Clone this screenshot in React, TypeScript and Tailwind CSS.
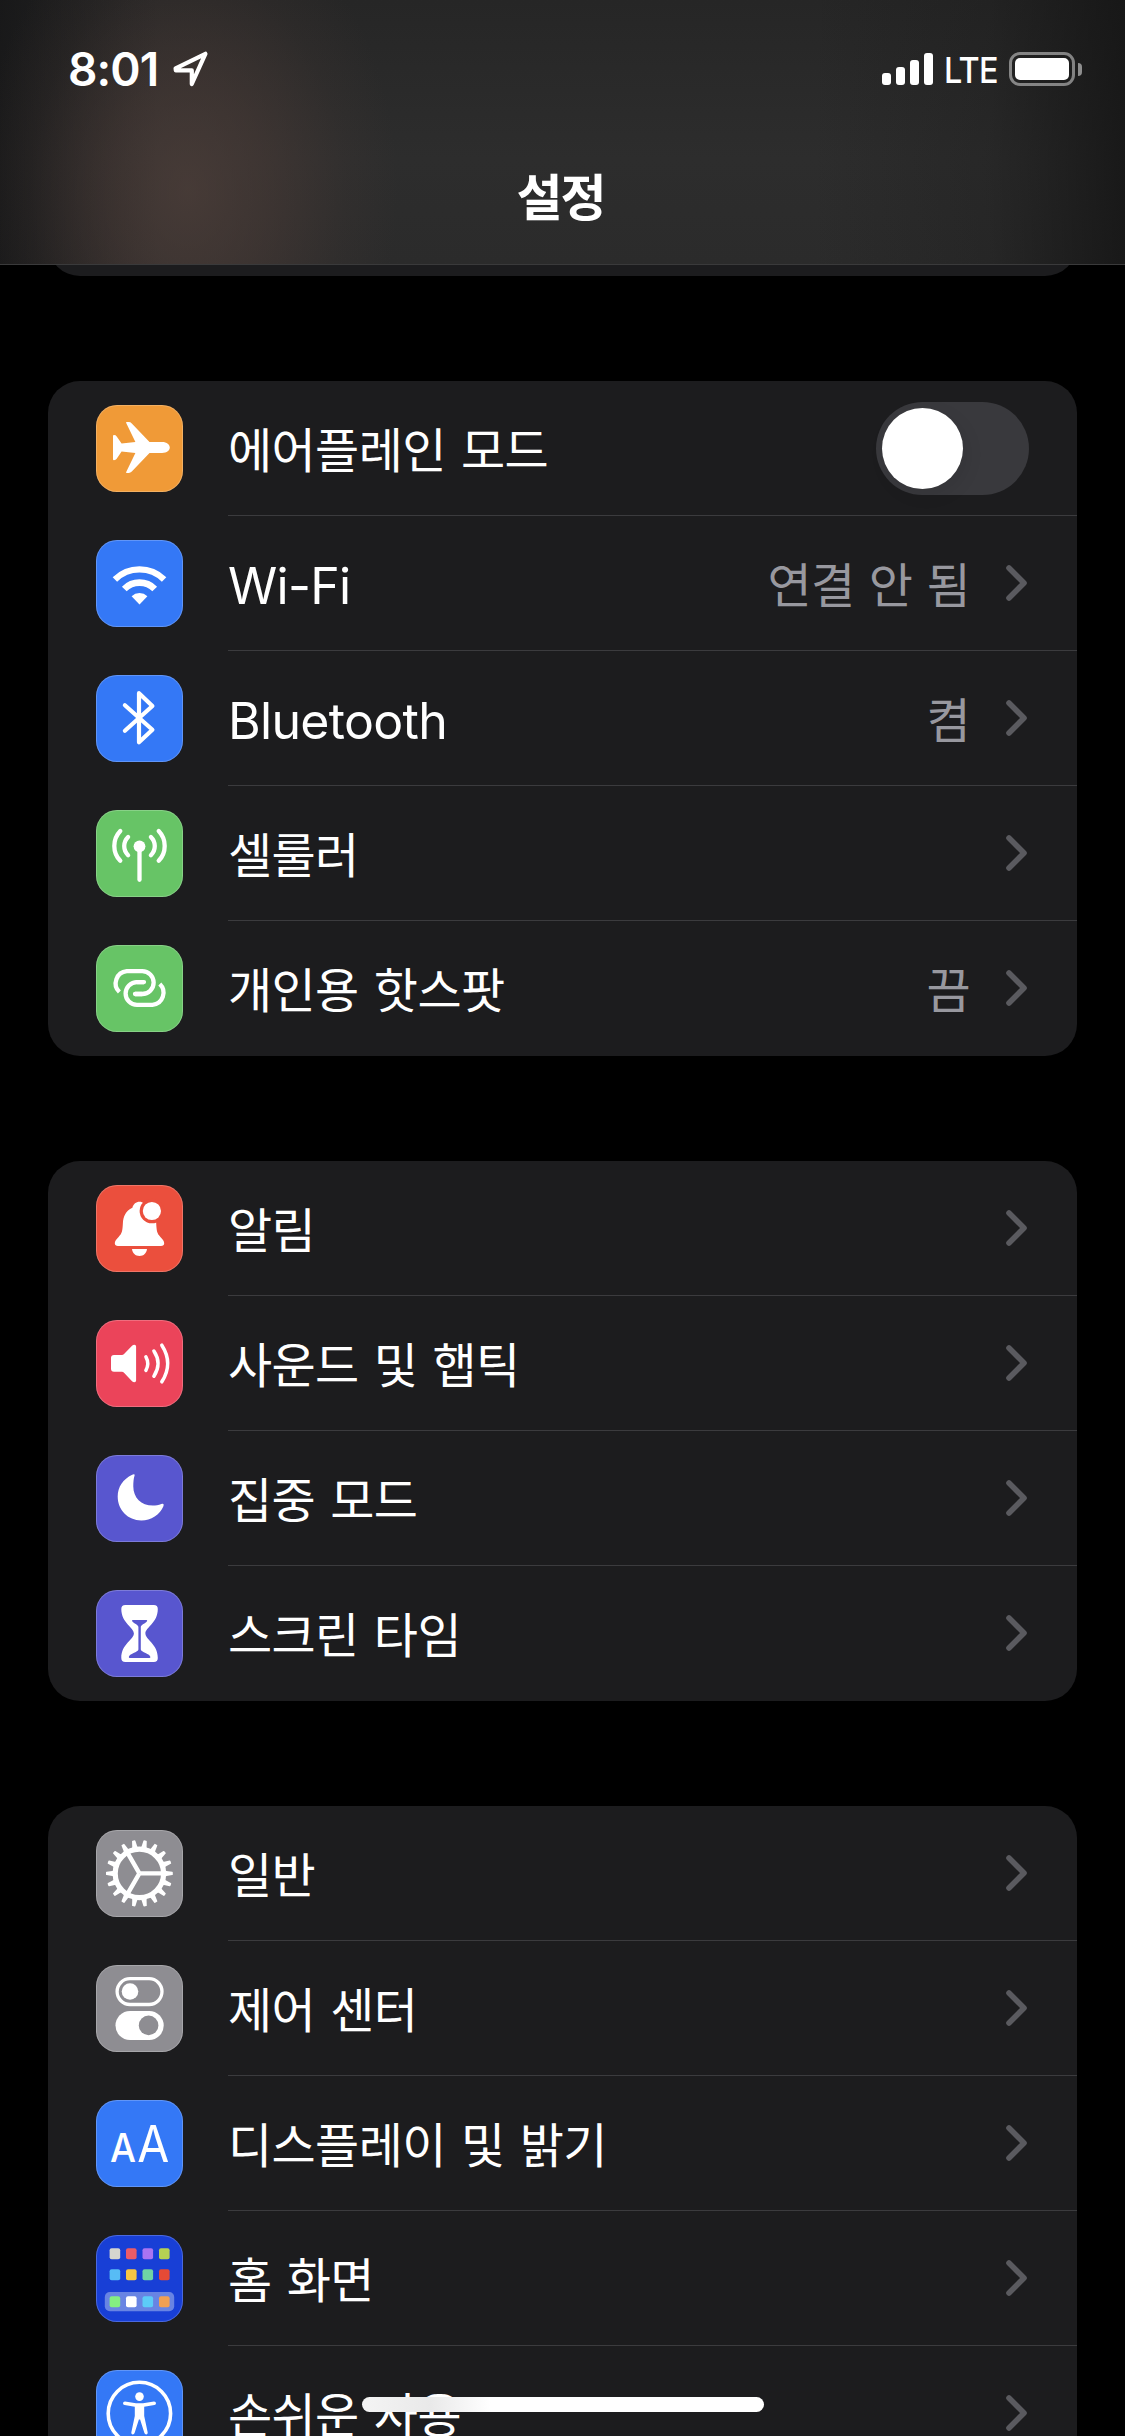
import type { ReactNode } from "react";

const KR = "font-['Noto_Sans_CJK_KR',sans-serif]";

function Plane() {
  return (
    <path
      fill="#fff"
      d="M53.5 37H66C71 37 73.8 39.6 73.8 42.6C73.8 45.6 71 48 66 48H53.5L35.8 66.6Q34.4 68 32.8 68H30.6Q29.8 68 30.2 67L39.4 48L25.6 46.6L20.7 53.8Q19.8 55.2 18 55.2Q17 55.2 17 54.2V31Q17 30 18 30Q19.8 30 20.7 31.4L25.6 38.6L39.4 37L30.2 18Q29.8 17 30.6 17H32.8Q34.4 17 35.8 18.4Z"
    />
  );
}

function Wifi() {
  return (
    <g fill="none" stroke="#fff">
      <path strokeWidth="6.3" d="M18.9 39.4A35 35 0 0 1 68.1 39.4" />
      <path strokeWidth="6.7" d="M28.3 49A21.5 21.5 0 0 1 58.7 49" />
      <path stroke="none" fill="#fff" d="M43.5 64.6L35.6 56.2A11.6 11.6 0 0 1 51.4 56.2Z" />
    </g>
  );
}

function Bluetooth() {
  return (
    <path
      fill="none"
      stroke="#fff"
      strokeWidth="4.2"
      strokeLinecap="round"
      strokeLinejoin="round"
      d="M28.9 30.2L56.4 54.8L43 67.2V18.2L56.4 31L28.9 55.8"
    />
  );
}

function Antenna() {
  return (
    <g fill="none" stroke="#fff" strokeWidth="4.3" strokeLinecap="round">
      <circle cx="43.5" cy="36.3" r="5.9" fill="#fff" stroke="none" />
      <path d="M43.5 38V69.8" />
      <path d="M32.1 27A12.6 12.6 0 0 0 32.1 45.2M54.9 27A12.6 12.6 0 0 1 54.9 45.2" />
      <path d="M24.3 21A21.5 21.5 0 0 0 24.3 50.8M62.7 21A21.5 21.5 0 0 1 62.7 50.8" />
    </g>
  );
}

function Hotspot() {
  return (
    <g fill="none" stroke="#fff" strokeWidth="4.3">
      <path d="M23.4 47A12.2 12.2 0 0 1 30.8 26.1H46.2A11.4 11.4 0 0 1 46.2 49H39" />
      <path d="M48 37.1H41A11.4 11.4 0 0 0 41 59.9H56.4A12.2 12.2 0 0 0 63.8 39" />
      <path strokeLinecap="round" d="M46 49H39M41 37.1H48" />
    </g>
  );
}

function Bell() {
  return (
    <g fill="#fff">
      <path d="M43.5 16.8C40 16.8 37.4 19 36.4 22.7C29.6 26 27.2 31.5 26.9 38C26.5 46 26 48.4 22.6 51.9C20.2 54.4 18.8 56 18.8 58.2C18.8 60 20 61 22 61H65C67 61 68.2 60 68.2 58.2C68.2 56 66.8 54.4 64.4 51.9C61 48.4 60.6 46 60.2 38C59.8 31 57.4 26 50.6 22.7C49.6 19 47 16.8 43.5 16.8Z" />
      <circle cx="55.9" cy="26" r="12.3" fill="#eb4f3d" />
      <circle cx="55.9" cy="26" r="9.1" />
      <path d="M36 64H51C50.6 68.2 47.6 71 43.5 71C39.4 71 36.4 68.2 36 64Z" />
    </g>
  );
}

function Speaker() {
  return (
    <g fill="none" stroke="#fff" strokeWidth="3.5" strokeLinecap="round">
      <path
        stroke="none"
        fill="#fff"
        d="M18 35H26Q27 35 27.8 34.2L35.8 26Q37 24.8 38.4 24.8Q40.1 24.8 40.1 26.6V60.4Q40.1 62.2 38.4 62.2Q37 62.2 35.8 61L27.8 52.6Q27 51.8 26 51.8H18Q15 51.8 15 48.8V38Q15 35 18 35Z"
      />
      <path d="M49.9 36.8Q53.6 43.4 49.9 50.4" />
      <path d="M57.9 31Q66.2 43.4 57.9 56.2" />
      <path d="M65.8 25.2Q77.6 43.4 65.8 61.8" />
    </g>
  );
}

function Moon() {
  return (
    <path
      fill="#fff"
      d="M38.6 20.6C38.9 19 37.6 18.8 36.2 19.7C27 24 21.7 32 21.7 41.5C21.7 55 32 65.4 45.3 65.4C55 65.4 64 59.8 67.4 51.2C68.2 49.2 67.2 48.4 65.4 49.1C62.5 50.2 59.5 50.6 57 50.6C45 50.6 37.3 42.5 37.3 31.5C37.3 27.5 37.6 23.5 38.6 20.6Z"
    />
  );
}

function Hourglass() {
  return (
    <g>
      <path
        fill="#fff"
        d="M29.3 15H57.8Q61.8 15 61.8 19C61.8 33 49.4 37.5 49.4 43.5C49.4 49.5 61.8 54 61.8 68Q61.8 72 57.8 72H29.3Q25.3 72 25.3 68C25.3 54 37.9 49.5 37.9 43.5C37.9 37.5 25.3 33 25.3 19Q25.3 15 29.3 15Z"
      />
      <path
        fill="#5856cf"
        d="M36.8 30H50.4Q51.6 30 51 31.2C49.6 33.6 44.8 34.4 44.8 37V59.4C44.8 62 54.4 63.6 54.4 67Q54.4 68 53.4 68H33.8Q32.8 68 32.8 67C32.8 63.6 42.4 62 42.4 59.4V37C42.4 34.4 37.6 33.6 36.2 31.2Q35.6 30 36.8 30Z"
      />
    </g>
  );
}

const TEETH = Array.from({ length: 18 }, (_, i) => i * 20);

function Gear() {
  return (
    <g fill="#fff">
      {TEETH.map((a) => (
        <path
          key={a}
          transform={`rotate(${a} 43.4 43.4)`}
          d="M68.4 39.9L70.5 40.9L76.2 41.7Q76.8 41.8 76.8 42.4V44.4Q76.8 45 76.2 45.1L70.5 45.9L68.4 46.9Z"
        />
      ))}
      <circle cx="43.4" cy="43.4" r="24.2" fill="none" stroke="#fff" strokeWidth="5.2" />
      <path
        fill="none"
        stroke="#fff"
        strokeWidth="4.4"
        d="M43.9 43.4H66M43.4 43.4L32 23.6M43.4 43.4L32 63.2"
      />
    </g>
  );
}

function Toggles() {
  return (
    <g>
      <rect x="21.1" y="13.7" width="44.9" height="25.8" rx="12.9" fill="none" stroke="#fff" strokeWidth="3.3" />
      <circle cx="34" cy="26.5" r="8.3" fill="#fff" />
      <rect x="19.5" y="46" width="48.2" height="29" rx="14.5" fill="#fff" />
      <circle cx="52.6" cy="60.4" r="9.8" fill="#8e8d92" />
    </g>
  );
}

function TextSize() {
  return (
    <g fill="#fff" className="font-['Inter',sans-serif]" textAnchor="middle">
      <text x="27" y="61.5" fontSize="40" fontWeight="500" textLength="26" lengthAdjust="spacingAndGlyphs">
        A
      </text>
      <text x="57.3" y="61.5" fontSize="50" fontWeight="400" textLength="32" lengthAdjust="spacingAndGlyphs">
        A
      </text>
    </g>
  );
}

const APPS = [
  ["#d5d5cf", "#ea5c68", "#a974f2", "#b6d153"],
  ["#57bcf6", "#f7c544", "#6fd3a5", "#e64a36"],
  ["#84ee82", "#ffffff", "#5ccbf8", "#f1a052"],
];
const APP_X = [13.6, 30, 46.5, 63];
const APP_Y = [13.2, 34.2, 61.2];

function HomeScreen() {
  return (
    <g>
      <rect x="8.8" y="57" width="69.4" height="19.2" rx="5" fill="#6884e3" />
      {APPS.map((row, r) =>
        row.map((c, i) => <rect key={`${r}${i}`} x={APP_X[i]} y={APP_Y[r]} width="10.6" height="11" rx="2" fill={c} />),
      )}
    </g>
  );
}

function Accessibility() {
  return (
    <g>
      <circle cx="43.4" cy="43.5" r="31.2" fill="none" stroke="#fff" strokeWidth="3.6" />
      <circle cx="43.5" cy="26.6" r="4.3" fill="#fff" />
      <path
        fill="#fff"
        d="M29 31.6L40 33.2H47L58 31.6Q60 31.6 60 33.2Q60 34.6 58.4 35L48.2 36.8V46L51.7 62.4Q51.8 64.2 50.2 64.4Q48.9 64.4 48.4 63L44.1 49.4H42.9L38.6 63Q38.1 64.4 36.8 64.4Q35.2 64.2 35.3 62.4L38.8 46V36.8L28.6 35Q27 34.6 27 33.2Q27 31.6 29 31.6Z"
      />
    </g>
  );
}

function Chevron() {
  return (
    <svg className="mr-0.5 h-9 w-[21px] shrink-0" viewBox="0 0 21 36" fill="none">
      <path d="M3 3L18 18L3 33" stroke="#5a5a5f" strokeWidth="5.6" strokeLinecap="round" strokeLinejoin="round" />
    </svg>
  );
}

type Item = { label: string; bg: string; icon: ReactNode; value?: string; toggle?: boolean; latin?: string };

const LATIN = "pt-[7px] text-[50px] tracking-[-0.7px] font-['Inter',sans-serif]";

function Row({ item, last }: { item: Item; last: boolean }) {
  return (
    <div className="flex h-[135px] pl-12">
      <div
        className={`mt-6 h-[87px] w-[87px] shrink-0 overflow-hidden rounded-[21px] shadow-[inset_0_0_0_1px_rgba(255,255,255,0.22)] ${item.bg}`}
      >
        <svg className="h-[87px] w-[87px]" viewBox="0 0 87 87">
          {item.icon}
        </svg>
      </div>
      <div
        className={`ml-[45px] flex flex-1 items-center border-b pr-12 ${last ? "border-transparent" : "border-[#3b3b3e]"}`}
      >
        <span
          className={`flex-1 whitespace-nowrap text-white ${item.latin ?? `pb-[3px] text-[48px] tracking-[-0.6px] [word-spacing:5px] ${KR}`}`}
        >
          {item.label}
        </span>
        {item.value && (
          <span className={`mr-[36px] pb-[3px] text-[48px] tracking-[-0.6px] whitespace-nowrap text-[#98989f] [word-spacing:4px] ${KR}`}>
            {item.value}
          </span>
        )}
        {item.toggle ? (
          <div className="flex h-[93px] w-[153px] items-center rounded-full bg-[#39393d] px-1.5">
            <div className="h-[81px] w-[81px] rounded-full bg-white shadow-[4px_6px_18px_rgba(0,0,0,0.08)]" />
          </div>
        ) : (
          <Chevron />
        )}
      </div>
    </div>
  );
}

const GROUPS: Item[][] = [
  [
    { label: "에어플레인 모드", bg: "bg-[#f09a37]", icon: <Plane />, toggle: true },
    { label: "Wi-Fi", bg: "bg-[#3478f6]", icon: <Wifi />, value: "연결 안 됨", latin: LATIN },
    { label: "Bluetooth", bg: "bg-[#3478f6]", icon: <Bluetooth />, value: "켬", latin: LATIN },
    { label: "셀룰러", bg: "bg-[#67c466]", icon: <Antenna /> },
    { label: "개인용 핫스팟", bg: "bg-[#67c466]", icon: <Hotspot />, value: "끔" },
  ],
  [
    { label: "알림", bg: "bg-[#eb4f3d]", icon: <Bell /> },
    { label: "사운드 및 햅틱", bg: "bg-[#eb445a]", icon: <Speaker /> },
    { label: "집중 모드", bg: "bg-[#5856cf]", icon: <Moon /> },
    { label: "스크린 타임", bg: "bg-[#5856cf]", icon: <Hourglass /> },
  ],
  [
    { label: "일반", bg: "bg-[#8e8d92]", icon: <Gear /> },
    { label: "제어 센터", bg: "bg-[#8e8d92]", icon: <Toggles /> },
    { label: "디스플레이 및 밝기", bg: "bg-[#3478f6]", icon: <TextSize /> },
    { label: "홈 화면", bg: "bg-[#183fd6]", icon: <HomeScreen /> },
    { label: "손쉬운 사용", bg: "bg-[#3478f6]", icon: <Accessibility /> },
  ],
];

function StatusBar() {
  return (
    <div className="flex h-[138px] items-center justify-between pr-[43px] pl-[68px]">
      <div className="flex items-center">
        <span className="w-[105px] text-[46px] leading-none font-semibold tracking-[-0.9px] text-white font-['Inter',sans-serif]">
          8:01
        </span>
        <svg className="h-9 w-9" viewBox="0 0 36 36" fill="none">
          <path
            d="M2.6 17.4L32.4 2.8L18.8 33V19.4H2.8Z"
            stroke="#fff"
            strokeWidth="4.2"
            strokeLinejoin="round"
          />
        </svg>
      </div>
      <div className="flex items-center">
        <div className="flex h-8 items-end gap-[5px]">
          <div className="h-3 w-[9px] rounded-[3px] bg-white" />
          <div className="h-[18px] w-[9px] rounded-[3px] bg-white" />
          <div className="h-[25px] w-[9px] rounded-[3px] bg-white" />
          <div className="h-8 w-[9px] rounded-[3px] bg-white" />
        </div>
        <div className="ml-[11px] w-[65px]">
          <span className="mt-[2px] block w-[66px] origin-left scale-x-[0.9] text-[36px] leading-none font-medium tracking-[-0.8px] text-white font-['Inter',sans-serif]">
            LTE
          </span>
        </div>
        <div className="h-[34px] w-[66px] rounded-[11px] border-[3px] border-white/45 p-[3px]">
          <div className="h-full w-full rounded-[5px] bg-white" />
        </div>
        <div className="ml-[3px] h-[13px] w-1 rounded-r-full bg-white/50" />
      </div>
    </div>
  );
}

export default function App() {
  return (
    <div className="relative flex h-[2436px] w-[1125px] flex-col overflow-hidden bg-black">
      <header className="h-[265px] shrink-0 border-b border-[#3a3a3b] bg-[radial-gradient(ellipse_210px_290px_at_188px_190px,rgba(84,66,60,0.65),rgba(84,64,58,0.42)_38%,rgba(84,64,58,0.12)_75%,transparent),linear-gradient(90deg,rgba(20,20,21,0.75),transparent_14%,transparent_72%,rgba(20,20,20,0.22)_88%,rgba(20,20,20,0.8)),linear-gradient(180deg,#262626,#2d2d2d_60%,#2b2b2b)]">
        <StatusBar />
        <h1 className={`-mt-1 pr-1 text-center text-[50px] leading-[120px] font-bold tracking-[-2px] text-white ${KR}`}>설정</h1>
      </header>
      <div className="flex h-[11px] shrink-0 items-end overflow-hidden px-12">
        <div className="h-20 w-full shrink-0 rounded-[32px] bg-[#1c1c1e]" />
      </div>
      <main className="flex shrink-0 flex-col gap-[105px] px-12 pt-[105px]">
        {GROUPS.map((items, g) => (
          <section key={g} className="overflow-hidden rounded-[32px] bg-[#1c1c1e]">
            {items.map((item, i) => (
              <Row key={item.label} item={item} last={i === items.length - 1} />
            ))}
          </section>
        ))}
      </main>
      <div className="absolute bottom-6 left-[362px] h-[15px] w-[402px] rounded-full bg-[linear-gradient(90deg,#f4f4f4,#e9e9e9_17%,#ffffff_32%)]" />
    </div>
  );
}
